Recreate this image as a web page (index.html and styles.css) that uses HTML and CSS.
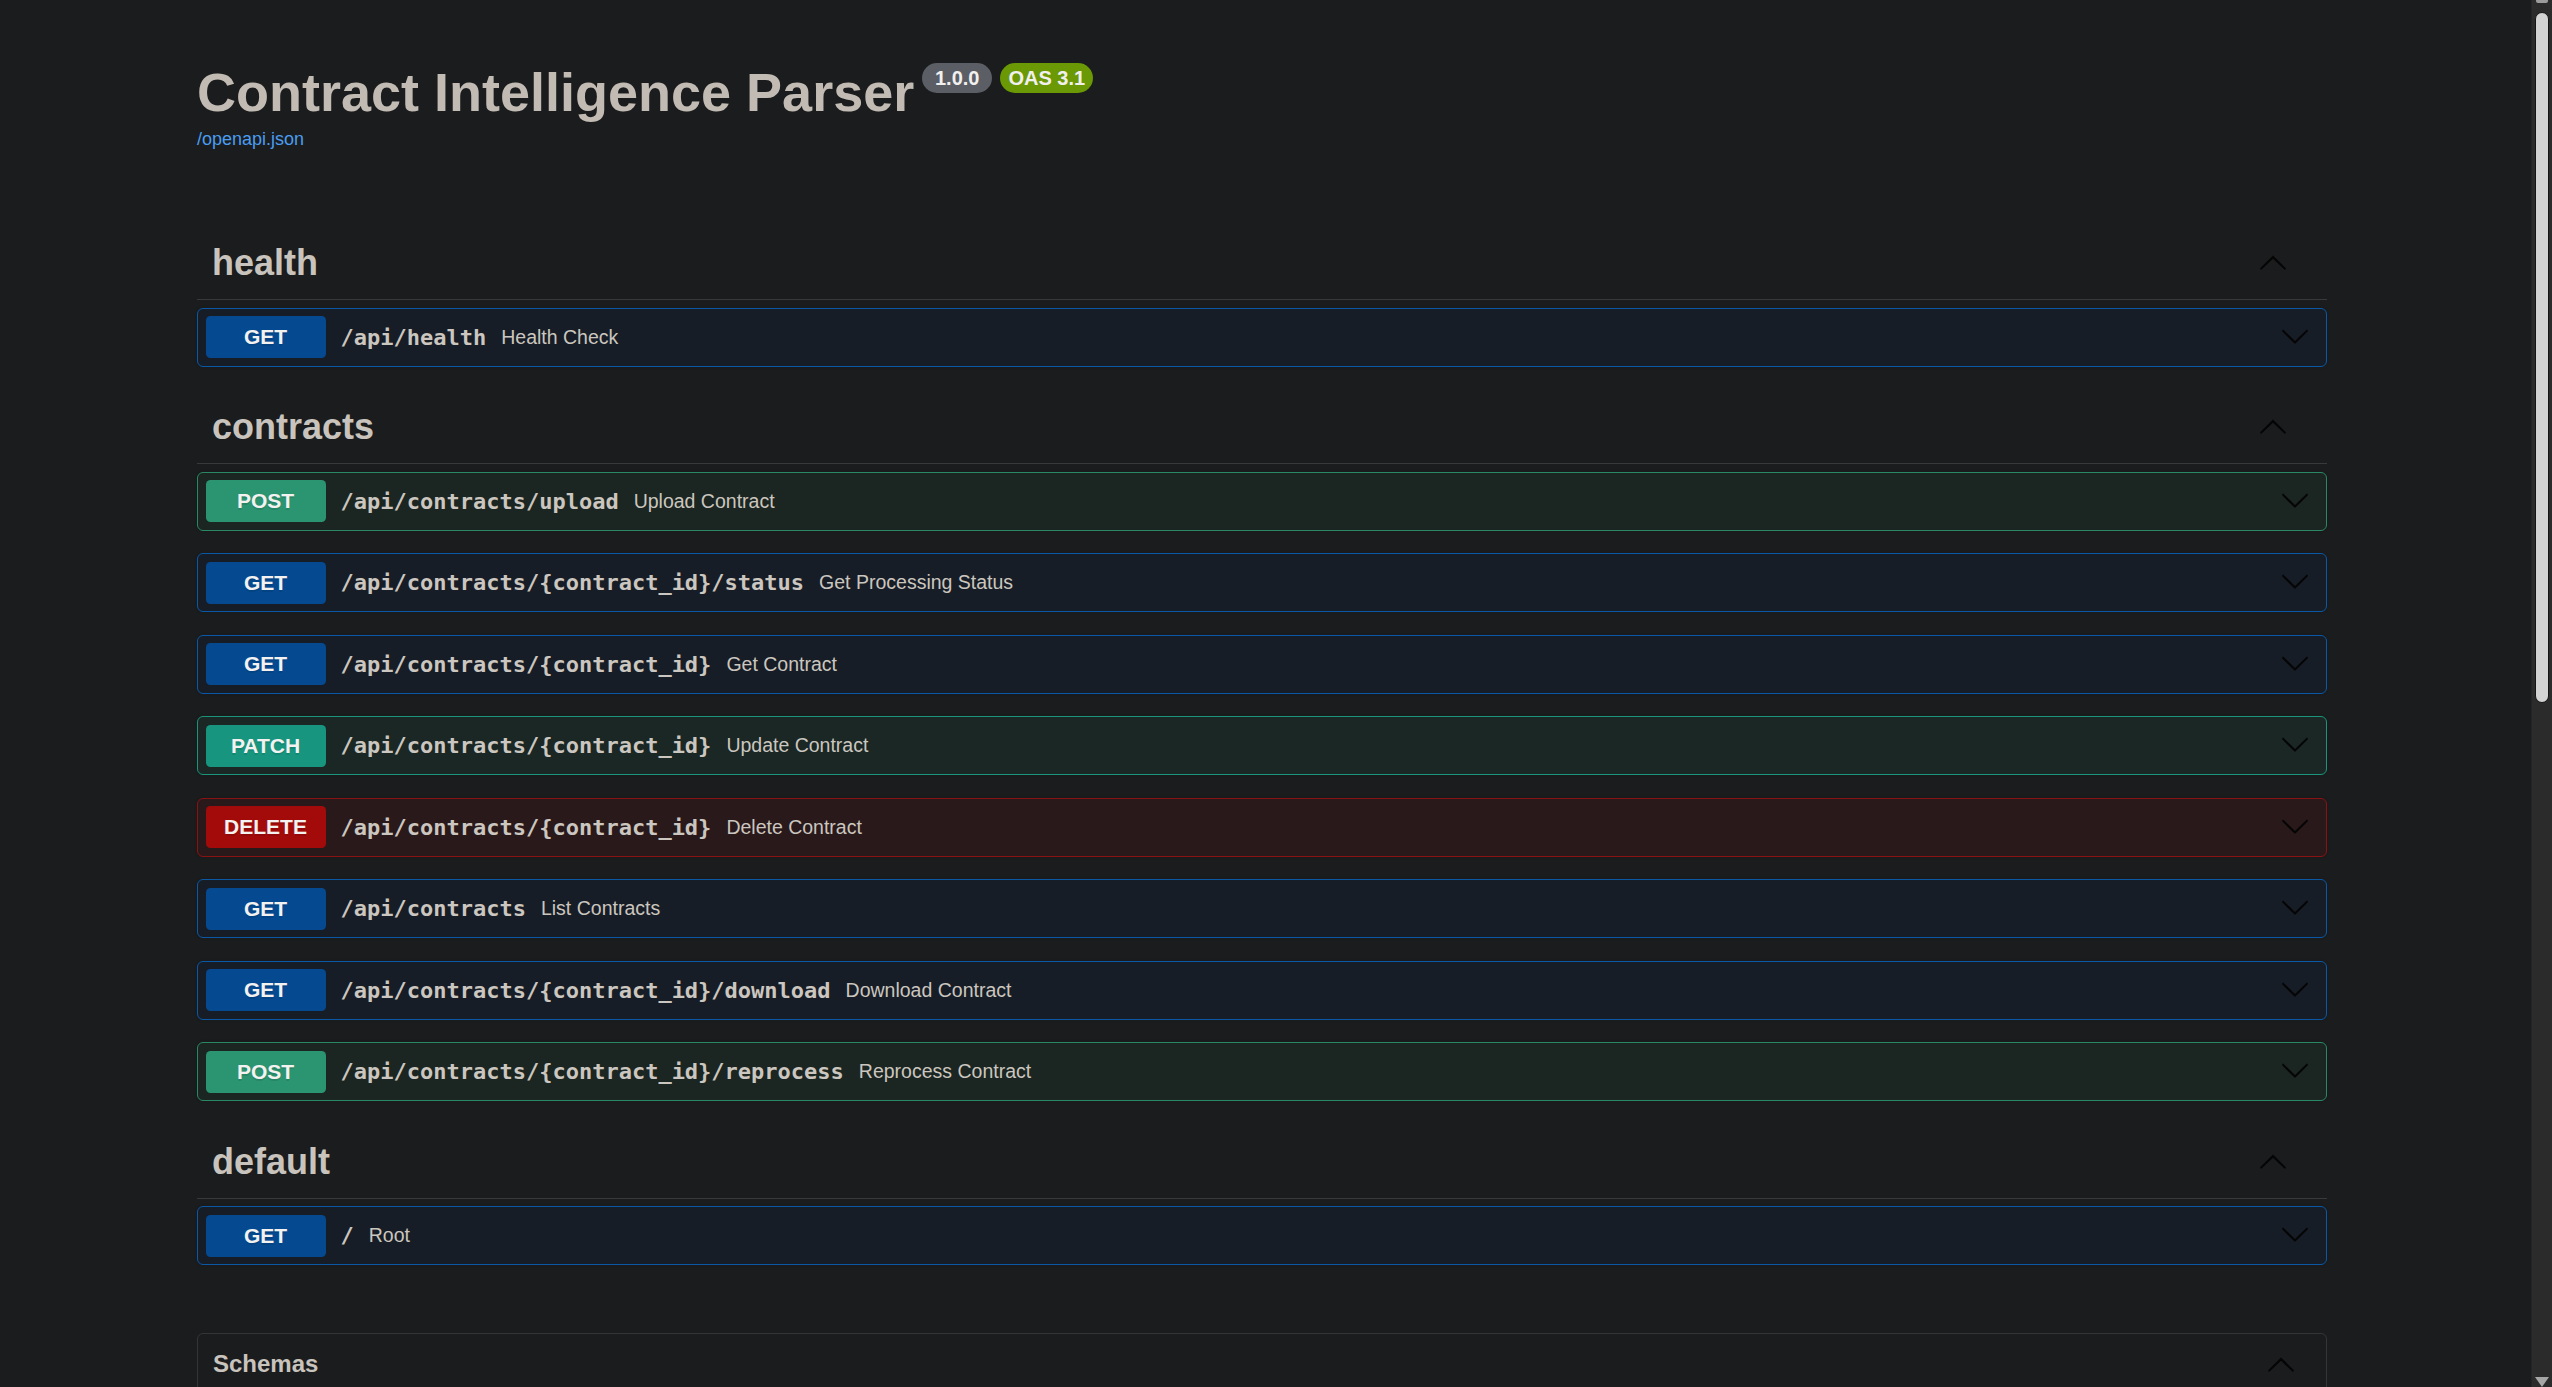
FILE: index.html
```html
<!DOCTYPE html>
<html lang="en">
<head>
<meta charset="utf-8">
<title>Contract Intelligence Parser - Swagger UI</title>
<link rel="stylesheet" href="styles.css">
</head>
<body>
<div class="app">
  <main class="main">
    <div class="info">
      <div class="title-row">
        <h2 class="title">Contract Intelligence Parser</h2>
        <span class="badge badge-version">1.0.0</span>
        <span class="badge badge-oas">OAS 3.1</span>
      </div>
      <a class="spec-link" href="#">/openapi.json</a>
    </div>

    <section class="tag-section">
      <h3 class="tag"><span class="tag-name">health</span><span class="tag-toggle"><svg viewBox="0 0 20 20"><path d="M17.418 14.908c.272.268.709.268.979 0s.271-.701 0-.969l-7.908-7.830c-.27-.268-.707-.268-.979 0l-7.908 7.830c-.27.268-.27.701 0 .969.271.268.709.268.979 0L10 7.767l7.418 7.141z"/></svg></span></h3>
      <div class="opblock get"><span class="method">GET</span><span class="path">/api/health</span><span class="desc">Health Check</span><span class="control"><svg viewBox="0 0 20 20"><path d="M17.418 6.109c.272-.268.709-.268.979 0s.271.701 0 .969l-7.908 7.83c-.27.268-.707.268-.979 0l-7.908-7.83c-.27-.268-.27-.701 0-.969.271-.268.709-.268.979 0L10 13.25l7.418-7.141z"/></svg></span></div>
    </section>

    <section class="tag-section">
      <h3 class="tag"><span class="tag-name">contracts</span><span class="tag-toggle"><svg viewBox="0 0 20 20"><path d="M17.418 14.908c.272.268.709.268.979 0s.271-.701 0-.969l-7.908-7.830c-.27-.268-.707-.268-.979 0l-7.908 7.830c-.27.268-.27.701 0 .969.271.268.709.268.979 0L10 7.767l7.418 7.141z"/></svg></span></h3>
      <div class="opblock post"><span class="method">POST</span><span class="path">/api/contracts/upload</span><span class="desc">Upload Contract</span><span class="control"><svg viewBox="0 0 20 20"><path d="M17.418 6.109c.272-.268.709-.268.979 0s.271.701 0 .969l-7.908 7.83c-.27.268-.707.268-.979 0l-7.908-7.83c-.27-.268-.27-.701 0-.969.271-.268.709-.268.979 0L10 13.25l7.418-7.141z"/></svg></span></div>
      <div class="opblock get"><span class="method">GET</span><span class="path">/api/contracts/{contract_id}/status</span><span class="desc">Get Processing Status</span><span class="control"><svg viewBox="0 0 20 20"><path d="M17.418 6.109c.272-.268.709-.268.979 0s.271.701 0 .969l-7.908 7.83c-.27.268-.707.268-.979 0l-7.908-7.83c-.27-.268-.27-.701 0-.969.271-.268.709-.268.979 0L10 13.25l7.418-7.141z"/></svg></span></div>
      <div class="opblock get"><span class="method">GET</span><span class="path">/api/contracts/{contract_id}</span><span class="desc">Get Contract</span><span class="control"><svg viewBox="0 0 20 20"><path d="M17.418 6.109c.272-.268.709-.268.979 0s.271.701 0 .969l-7.908 7.83c-.27.268-.707.268-.979 0l-7.908-7.83c-.27-.268-.27-.701 0-.969.271-.268.709-.268.979 0L10 13.25l7.418-7.141z"/></svg></span></div>
      <div class="opblock patch"><span class="method">PATCH</span><span class="path">/api/contracts/{contract_id}</span><span class="desc">Update Contract</span><span class="control"><svg viewBox="0 0 20 20"><path d="M17.418 6.109c.272-.268.709-.268.979 0s.271.701 0 .969l-7.908 7.83c-.27.268-.707.268-.979 0l-7.908-7.83c-.27-.268-.27-.701 0-.969.271-.268.709-.268.979 0L10 13.25l7.418-7.141z"/></svg></span></div>
      <div class="opblock delete"><span class="method">DELETE</span><span class="path">/api/contracts/{contract_id}</span><span class="desc">Delete Contract</span><span class="control"><svg viewBox="0 0 20 20"><path d="M17.418 6.109c.272-.268.709-.268.979 0s.271.701 0 .969l-7.908 7.83c-.27.268-.707.268-.979 0l-7.908-7.83c-.27-.268-.27-.701 0-.969.271-.268.709-.268.979 0L10 13.25l7.418-7.141z"/></svg></span></div>
      <div class="opblock get"><span class="method">GET</span><span class="path">/api/contracts</span><span class="desc">List Contracts</span><span class="control"><svg viewBox="0 0 20 20"><path d="M17.418 6.109c.272-.268.709-.268.979 0s.271.701 0 .969l-7.908 7.83c-.27.268-.707.268-.979 0l-7.908-7.830c-.27-.268-.27-.701 0-.969.271-.268.709-.268.979 0L10 13.25l7.418-7.141z"/></svg></span></div>
      <div class="opblock get"><span class="method">GET</span><span class="path">/api/contracts/{contract_id}/download</span><span class="desc">Download Contract</span><span class="control"><svg viewBox="0 0 20 20"><path d="M17.418 6.109c.272-.268.709-.268.979 0s.271.701 0 .969l-7.908 7.83c-.27.268-.707.268-.979 0l-7.908-7.83c-.27-.268-.27-.701 0-.969.271-.268.709-.268.979 0L10 13.25l7.418-7.141z"/></svg></span></div>
      <div class="opblock post"><span class="method">POST</span><span class="path">/api/contracts/{contract_id}/reprocess</span><span class="desc">Reprocess Contract</span><span class="control"><svg viewBox="0 0 20 20"><path d="M17.418 6.109c.272-.268.709-.268.979 0s.271.701 0 .969l-7.908 7.83c-.27.268-.707.268-.979 0l-7.908-7.83c-.27-.268-.27-.701 0-.969.271-.268.709-.268.979 0L10 13.25l7.418-7.141z"/></svg></span></div>
    </section>

    <section class="tag-section">
      <h3 class="tag"><span class="tag-name">default</span><span class="tag-toggle"><svg viewBox="0 0 20 20"><path d="M17.418 14.908c.272.268.709.268.979 0s.271-.701 0-.969l-7.908-7.830c-.27-.268-.707-.268-.979 0l-7.908 7.830c-.27.268-.27.701 0 .969.271.268.709.268.979 0L10 7.767l7.418 7.141z"/></svg></span></h3>
      <div class="opblock get"><span class="method">GET</span><span class="path">/</span><span class="desc">Root</span><span class="control"><svg viewBox="0 0 20 20"><path d="M17.418 6.109c.272-.268.709-.268.979 0s.271.701 0 .969l-7.908 7.83c-.27.268-.707.268-.979 0l-7.908-7.83c-.27-.268-.27-.701 0-.969.271-.268.709-.268.979 0L10 13.25l7.418-7.141z"/></svg></span></div>
    </section>

    <section class="models">
      <h4 class="models-title"><span class="models-name">Schemas</span><svg viewBox="0 0 20 20"><path d="M17.418 14.908c.272.268.709.268.979 0s.271-.701 0-.969l-7.908-7.830c-.27-.268-.707-.268-.979 0l-7.908 7.830c-.27.268-.27.701 0 .969.271.268.709.268.979 0L10 7.767l7.418 7.141z"/></svg></h4>
    </section>
  </main>

  <div class="scrollbar">
    <span class="sb-up"></span>
    <span class="sb-thumb"></span>
    <span class="sb-down"></span>
  </div>
</div>
</body>
</html>
```

FILE: styles.css
```css
html, body {
  margin: 0;
  padding: 0;
  height: 1387px;
  overflow: hidden;
  background: #1b1c1e;
}

body {
  font-family: "Liberation Sans", Arial, sans-serif;
  color: #c8c3bc;
}

.app {
  display: flex;
  height: 1387px;
  overflow: hidden;
}

.main {
  flex: 1;
  min-width: 0;
  display: flex;
  flex-direction: column;
  padding: 61px 204px 0 197px;
}

/* info block */
.info {
  display: flex;
  flex-direction: column;
  margin-bottom: 75px;
}

.title-row {
  display: flex;
  align-items: flex-start;
}

.title {
  margin: 0;
  font-size: 54px;
  line-height: 62px;
  font-weight: 700;
  color: #c1bbb3;
}

.badge {
  box-sizing: border-box;
  margin-top: 2px;
  height: 30px;
  line-height: 30px;
  padding: 0 8px;
  border-radius: 57px;
  font-size: 20px;
  font-weight: 700;
  color: #f2f0ee;
  text-align: center;
}

.badge-version {
  margin-left: 8px;
  min-width: 70px;
  background: #5b5f65;
}

.badge-oas {
  margin-left: 8px;
  min-width: 93px;
  background: #6a9905;
}

.spec-link {
  align-self: flex-start;
  margin-top: 6px;
  font-size: 18px;
  line-height: 21px;
  color: #4a9df0;
  text-decoration: none;
}

/* tag sections */
.tag-section {
  display: flex;
  flex-direction: column;
}

.tag {
  display: flex;
  align-items: center;
  height: 44px;
  margin: 0 0 7.5px;
  padding: 16px 30px 14px 15px;
  border-bottom: 1px solid #38393b;
  font-size: 36px;
  font-weight: 700;
  color: #c8c3bc;
}

.tag-name {
  flex: 1;
}

.tag-toggle {
  display: flex;
  padding-right: 9px;
  margin-top: -2px;
}

.tag-toggle svg,
.control svg,
.models-title svg {
  width: 30px;
  height: 30px;
  fill: #050505;
}

/* operation rows */
.opblock {
  display: flex;
  align-items: center;
  padding: 7.5px;
  margin-bottom: 22.5px;
  border: 1px solid;
  border-radius: 6px;
  box-shadow: 0 0 3px rgba(0, 0, 0, 0.19);
}

.method {
  min-width: 120px;
  padding: 9px 0;
  border-radius: 4.5px;
  font-size: 21px;
  line-height: 24px;
  font-weight: 700;
  text-align: center;
  color: #f4f2f0;
  text-shadow: 0 1.5px 0 rgba(0, 0, 0, 0.1);
}

.path {
  padding: 0 15px;
  font-family: "DejaVu Sans Mono", "Liberation Mono", monospace;
  font-size: 22px;
  font-weight: 700;
  color: #cbc6bf;
}

.desc {
  flex: 1;
  font-size: 19.5px;
  color: #cbc6bf;
}

.control {
  display: flex;
  padding-right: 8.5px;
  margin-top: -3px;
}

.get {
  background: #171d26;
  border-color: #0b58a6;
}
.get .method {
  background: #054a91;
}

.post {
  background: #1b2521;
  border-color: #2a8864;
}
.post .method {
  background: #2b9471;
}

.patch {
  background: #1a2725;
  border-color: #1a957b;
}
.patch .method {
  background: #17957e;
}

.delete {
  background: #2a191b;
  border-color: #8a1212;
}
.delete .method {
  background: #a30b0b;
}

/* models */
.models {
  margin-top: 45px;
  min-height: 300px;
  border: 1px solid #333537;
  border-radius: 6px;
}

.models-title {
  display: flex;
  align-items: center;
  margin: 0;
  padding: 15px 30px 15px 15px;
  font-size: 24px;
  line-height: 30px;
  font-weight: 700;
  color: #c8c3bc;
}

.models-name {
  flex: 1;
}

/* fake window scrollbar */
.scrollbar {
  flex: none;
  width: 21px;
  display: flex;
  flex-direction: column;
  align-items: center;
  background: #2b2b2b;
  box-shadow: inset 1px 0 0 #242424;
}

.sb-up {
  width: 12px;
  height: 3px;
  background: #9c9c9c;
  border-radius: 0 0 2px 2px;
}

.sb-thumb {
  box-sizing: border-box;
  width: 14px;
  height: 691px;
  margin-top: 9px;
  background: #d3d3d3;
  border: 1px solid #151515;
  border-radius: 7px;
}

.sb-down {
  margin-top: auto;
  width: 0;
  height: 0;
  border-left: 7px solid transparent;
  border-right: 7px solid transparent;
  border-top: 10px solid #a6a6a6;
}
```
